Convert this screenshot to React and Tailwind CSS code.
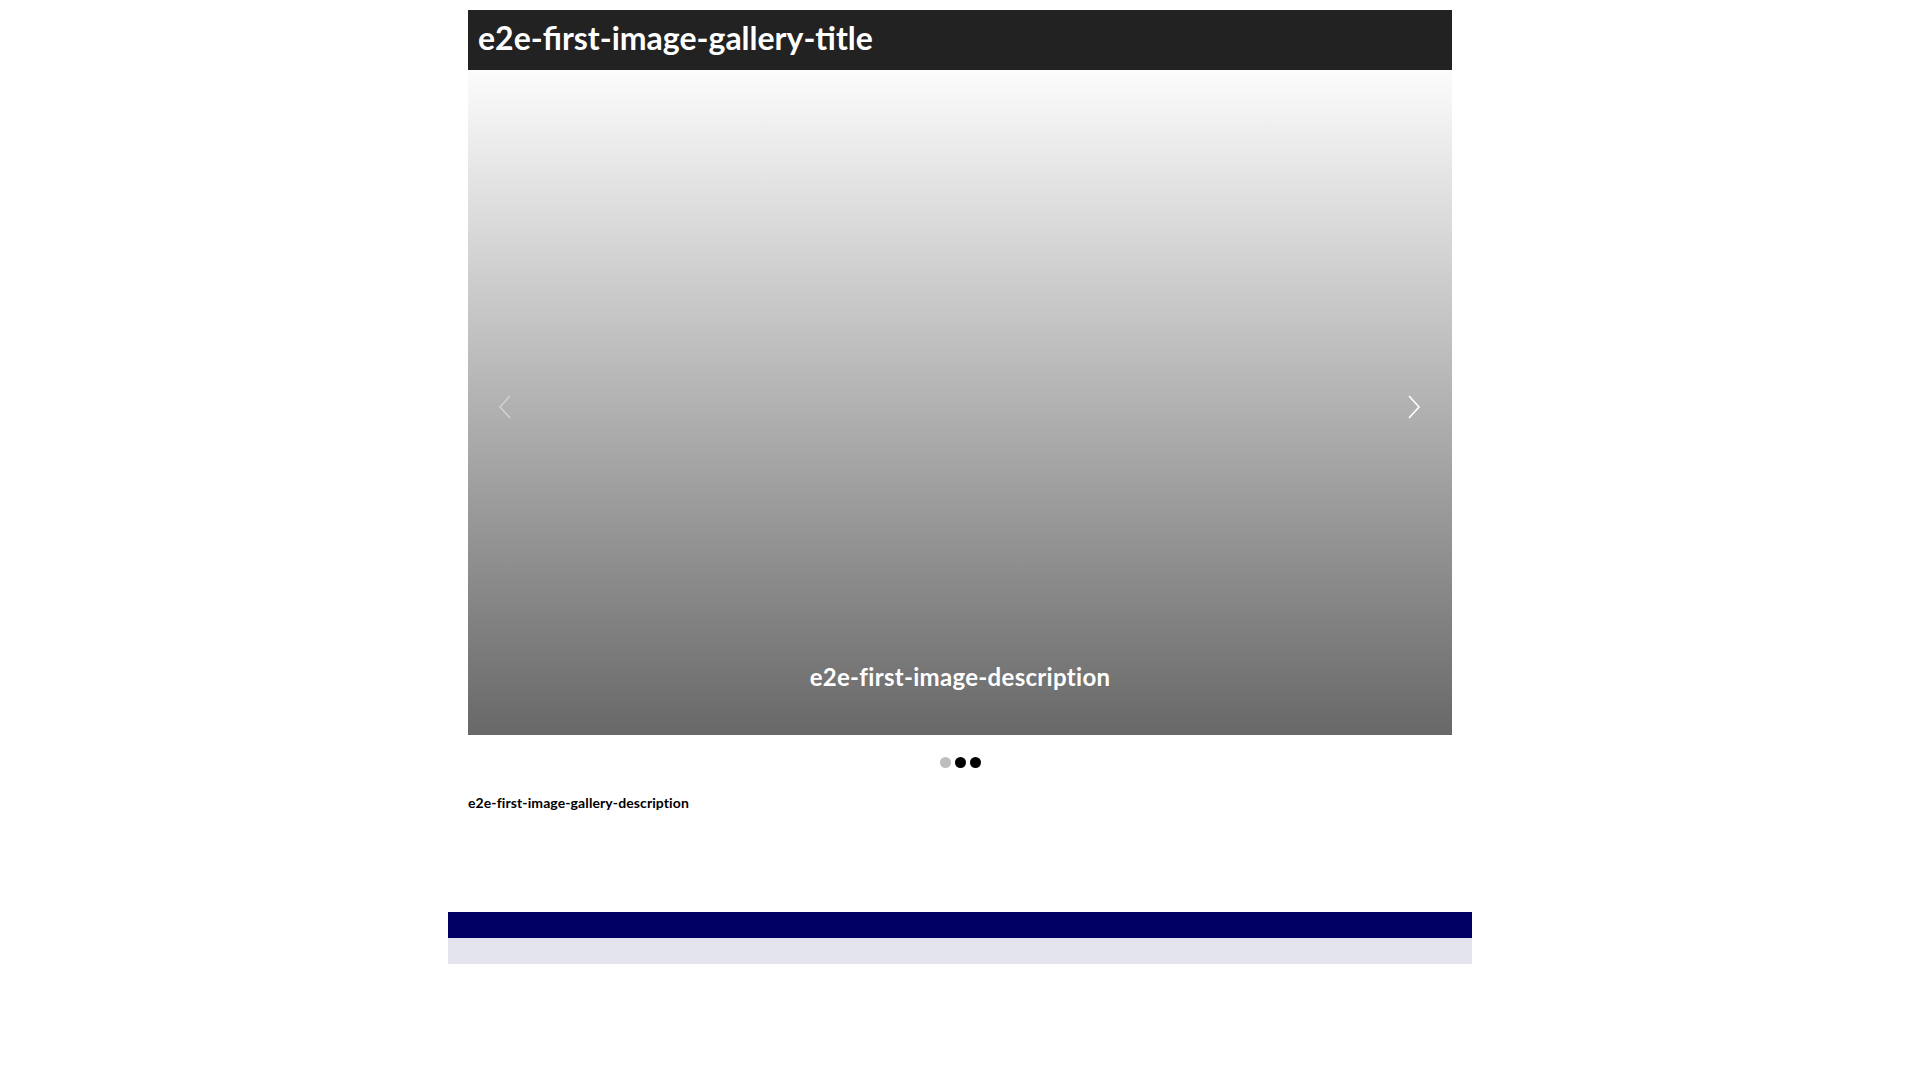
import React from "react";

export default function App() {
  return (
    <div className="min-h-[1080px] bg-white" style={{ fontFamily: "Lato, 'Open Sans', sans-serif" }}>
      <div className="mx-auto w-[984px] pt-[10px]">
        <div className="h-[60px] bg-[#222222] flex items-center px-[10px] pb-[5px]">
          <h1 className="text-[32px] font-bold text-white leading-none">e2e-first-image-gallery-title</h1>
        </div>
        <div className="relative h-[665px] bg-[linear-gradient(to_bottom,#fcfcfc,#686868)]">
          <button className="absolute left-[27px] top-[322px] w-[20px] h-[30px] flex items-center justify-center opacity-40">
            <svg width="14" height="24" viewBox="0 0 14 24" fill="none">
              <path d="M12 1 L2 12 L12 23" stroke="white" strokeWidth="1.6" />
            </svg>
          </button>
          <button className="absolute right-[28px] top-[322px] w-[20px] h-[30px] flex items-center justify-center">
            <svg width="14" height="24" viewBox="0 0 14 24" fill="none">
              <path d="M2 1 L12 12 L2 23" stroke="white" strokeWidth="1.6" />
            </svg>
          </button>
          <div className="absolute left-0 right-0 top-[595px] text-center text-white text-[24px] font-bold leading-none tracking-[0.3px]">
            e2e-first-image-description
          </div>
        </div>
        <div className="flex justify-center gap-[4px] pt-[22px]">
          <span className="w-[11px] h-[11px] rounded-full bg-[#bdbdbd]" />
          <span className="w-[11px] h-[11px] rounded-full bg-black" />
          <span className="w-[11px] h-[11px] rounded-full bg-black" />
        </div>
        <p className="mt-[28px] text-[14px] font-bold text-black leading-none tracking-[0.1px]">e2e-first-image-gallery-description</p>
      </div>
      <div className="mx-auto w-[1024px] mt-[102px]">
        <div className="h-[26px] bg-[#000064]" />
        <div className="h-[26px] bg-[#e4e4ef]" />
      </div>
    </div>
  );
}
